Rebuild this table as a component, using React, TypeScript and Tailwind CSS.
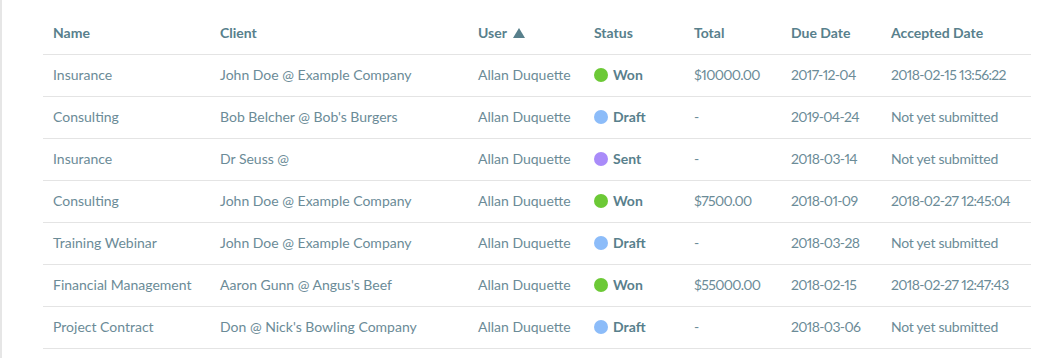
import React from 'react';

type Status = 'Won' | 'Draft' | 'Sent';

const dotColor: Record<Status, string> = {
  Won: 'bg-[#6cc936]',
  Draft: 'bg-[#8cbcf9]',
  Sent: 'bg-[#a98bf9]',
};

const rows: { name: string; client: string; status: Status; total: string; due: string; accepted: string }[] = [
  { name: 'Insurance', client: 'John Doe @ Example Company', status: 'Won', total: '$10000.00', due: '2017-12-04', accepted: '2018-02-15 13:56:22' },
  { name: 'Consulting', client: "Bob Belcher @ Bob's Burgers", status: 'Draft', total: '-', due: '2019-04-24', accepted: 'Not yet submitted' },
  { name: 'Insurance', client: 'Dr Seuss @', status: 'Sent', total: '-', due: '2018-03-14', accepted: 'Not yet submitted' },
  { name: 'Consulting', client: 'John Doe @ Example Company', status: 'Won', total: '$7500.00', due: '2018-01-09', accepted: '2018-02-27 12:45:04' },
  { name: 'Training Webinar', client: 'John Doe @ Example Company', status: 'Draft', total: '-', due: '2018-03-28', accepted: 'Not yet submitted' },
  { name: 'Financial Management', client: "Aaron Gunn @ Angus's Beef", status: 'Won', total: '$55000.00', due: '2018-02-15', accepted: '2018-02-27 12:47:43' },
  { name: 'Project Contract', client: "Don @ Nick's Bowling Company", status: 'Draft', total: '-', due: '2018-03-06', accepted: 'Not yet submitted' },
];

// digits in Lato run wider than the original font, so pull them in a bit
const num = (s: string) => (/\d/.test(s) ? 'tracking-[-0.65px]' : 'tracking-[-0.25px]');

export default function App() {
  return (
    <div className="flex h-[358px] w-[1056px] bg-white font-['Lato',sans-serif] text-[14px] leading-[18px] text-[#6b8b97]">
      <div className="w-[2px] shrink-0 bg-[#e6e6e6]" />
      <div className="pl-[41px] pt-[12px]">
        <table className="w-[988px] table-fixed border-collapse text-left proportional-nums">
          <colgroup>
            <col className="w-[167px]" />
            <col className="w-[258px]" />
            <col className="w-[116px]" />
            <col className="w-[100px]" />
            <col className="w-[97px]" />
            <col className="w-[100px]" />
            <col className="w-[150px]" />
          </colgroup>
          <thead>
            <tr className="h-[42px] border-b border-[#e4e4e4] font-bold text-[#58808c]">
              <th className="px-[10px]">Name</th>
              <th className="px-[10px]">Client</th>
              <th className="px-[10px]">
                <span className="flex items-center gap-[6px]">
                  User
                  <svg width="12" height="10" viewBox="0 0 12 10">
                    <path d="M6 0 L12 10 L0 10 Z" fill="#58808c" />
                  </svg>
                </span>
              </th>
              <th className="px-[10px]">Status</th>
              <th className="px-[10px]">Total</th>
              <th className="px-[10px]">Due Date</th>
              <th className="px-[10px]">Accepted Date</th>
            </tr>
          </thead>
          <tbody>
            {rows.map((r, i) => (
              <tr key={i} className="h-[42px] border-b border-[#e4e4e4]">
                <td className="px-[10px] whitespace-nowrap">{r.name}</td>
                <td className="px-[10px] whitespace-nowrap">{r.client}</td>
                <td className="px-[10px] whitespace-nowrap">Allan Duquette</td>
                <td className="px-[10px]">
                  <span className="flex items-center gap-[5px] font-bold text-[#58808c]">
                    <span className={`h-[14px] w-[14px] rounded-full ${dotColor[r.status]}`} />
                    {r.status}
                  </span>
                </td>
                <td className={`px-[10px] ${num(r.total)}`}>{r.total}</td>
                <td className={`px-[10px] ${num(r.due)}`}>{r.due}</td>
                <td className={`px-[10px] whitespace-nowrap ${num(r.accepted)}`}>{r.accepted}</td>
              </tr>
            ))}
          </tbody>
        </table>
      </div>
    </div>
  );
}
